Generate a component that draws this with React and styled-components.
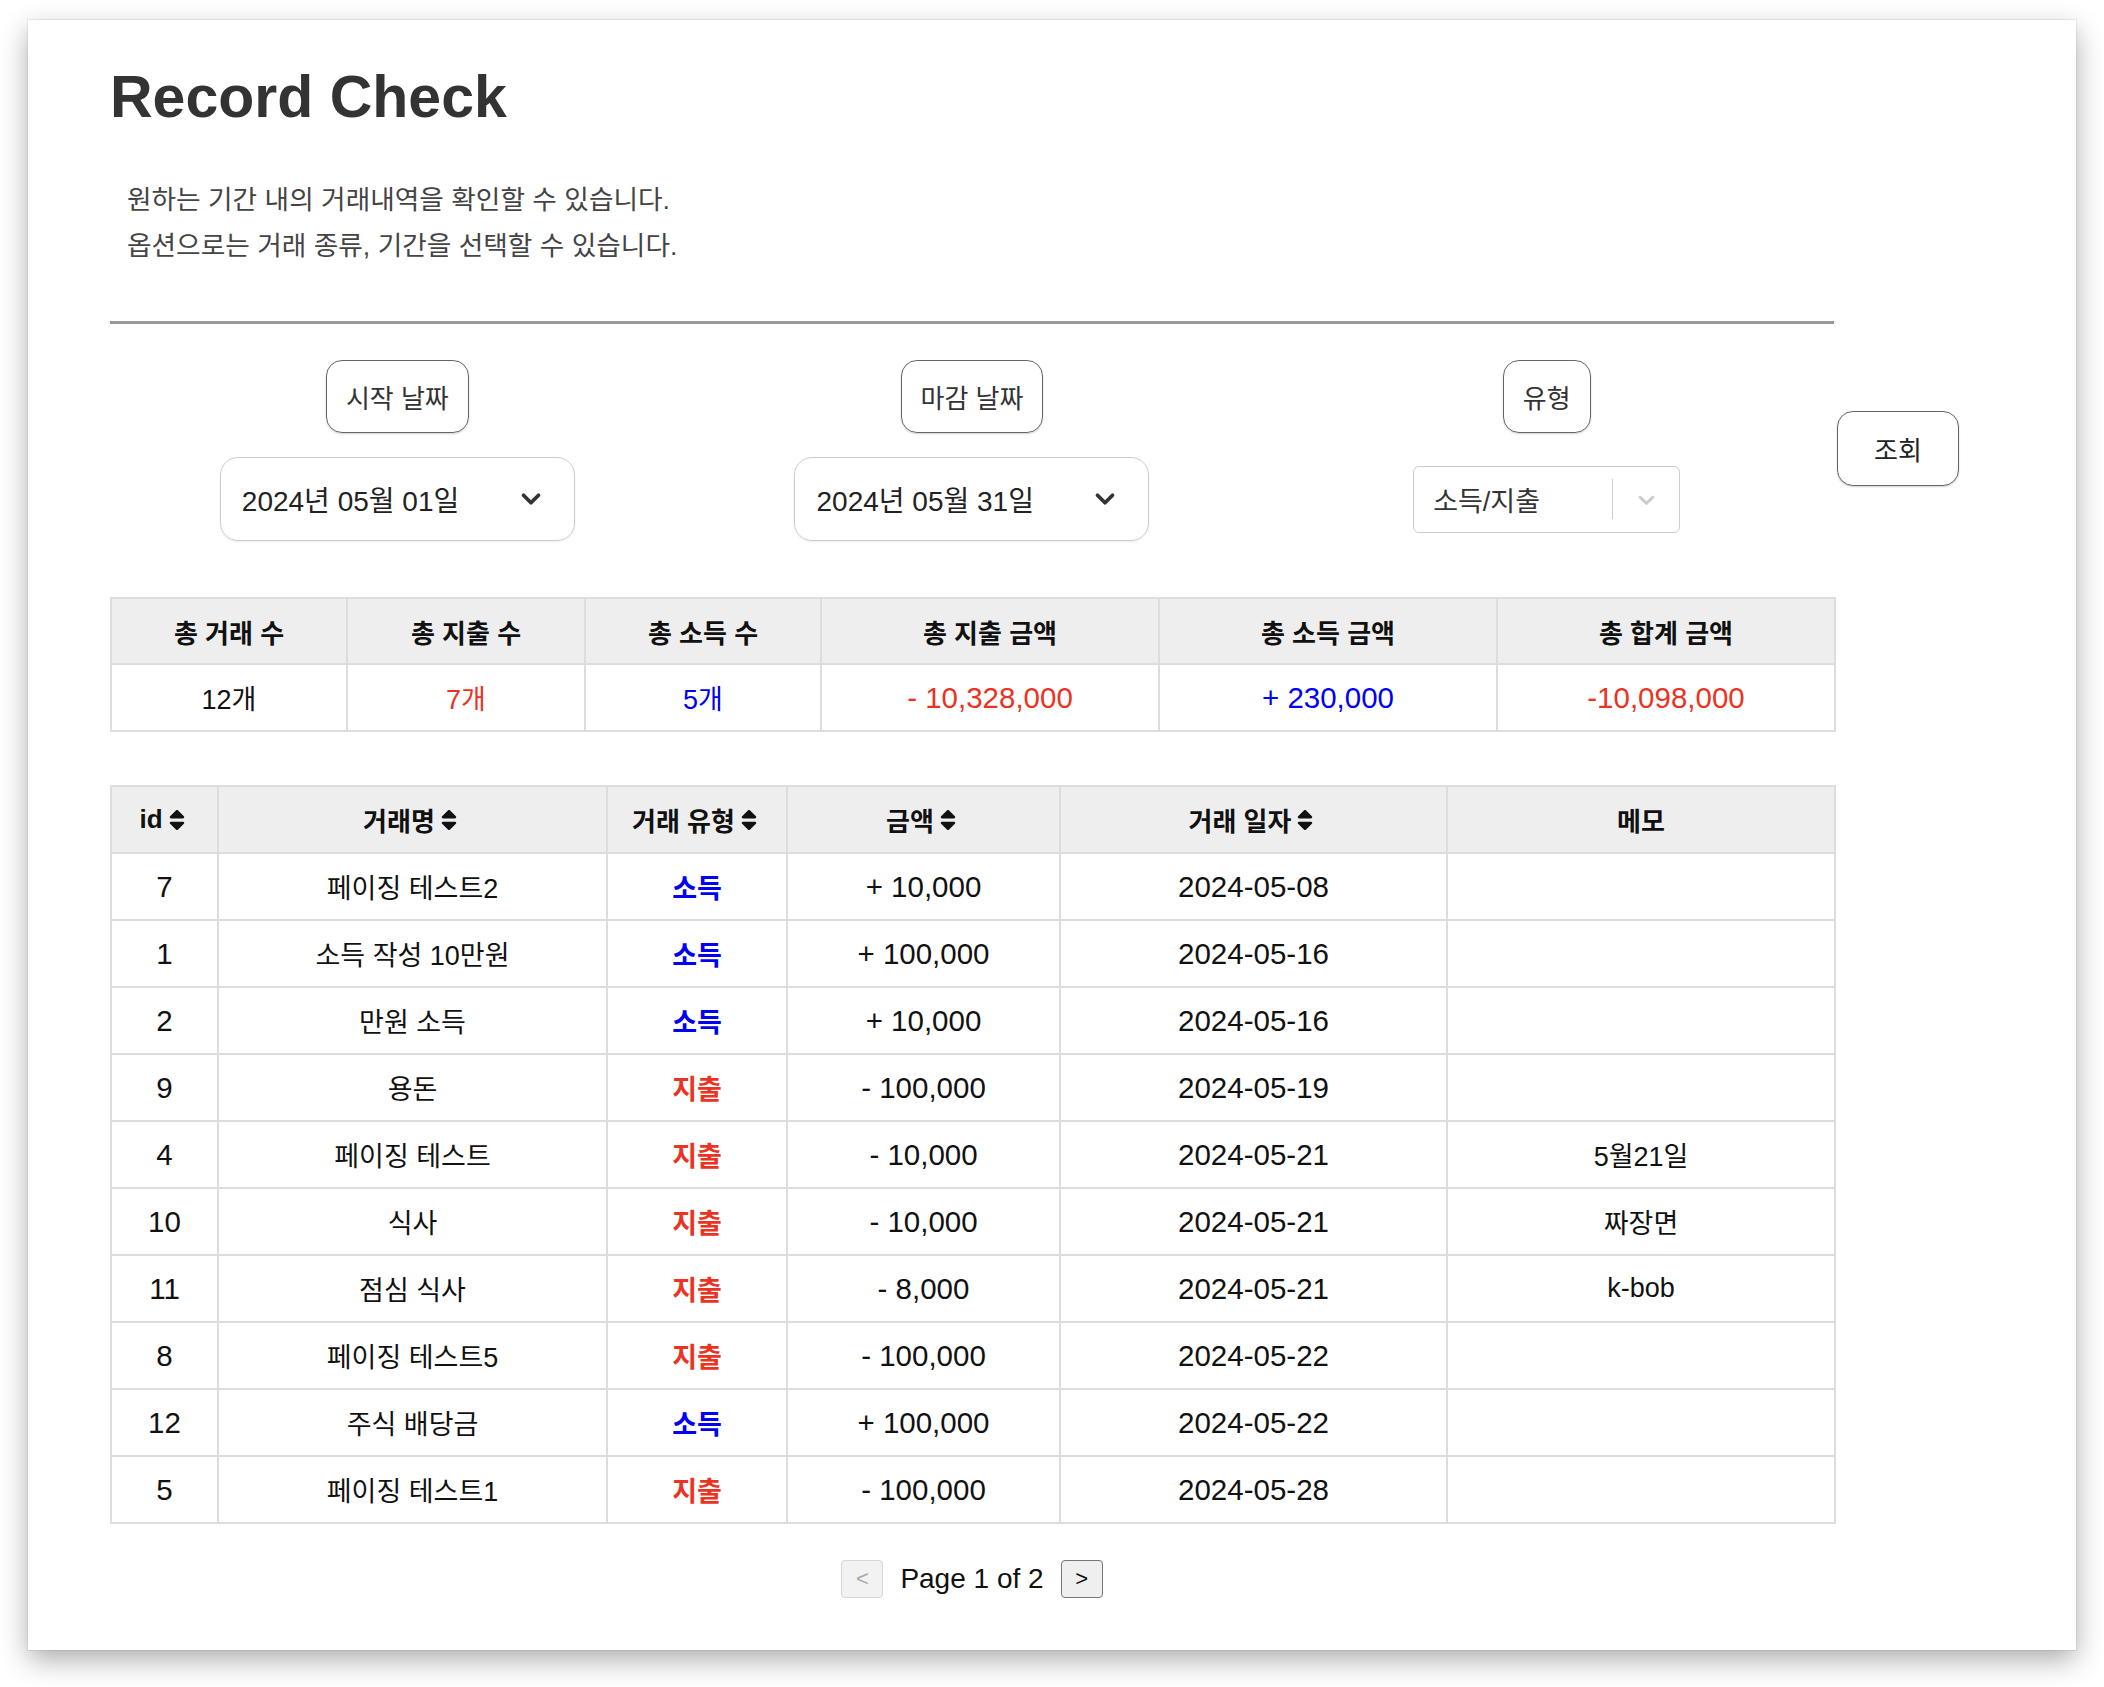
import styled, { createGlobalStyle } from 'styled-components';
import { ChevronDown } from 'lucide-react';
import { FaSort } from 'react-icons/fa';

const GlobalStyle = createGlobalStyle`
  body {
    margin: 0;
    background: #fff;
    font-family: "Liberation Sans", "Noto Sans CJK KR", sans-serif;
    color: #000;
  }
`;

const RED = '#ea3323';
const BLUE = '#0000f5';

const Page = styled.div`
  padding: 20px 28px 38px;
`;

const Card = styled.div`
  width: 2048px;
  box-sizing: border-box;
  background: #fff;
  padding: 48px 0 52px 82px;
  box-shadow: 0 10px 26px rgba(0, 0, 0, 0.32), 0 0 0 1px rgba(0, 0, 0, 0.06);
`;

const Title = styled.h1`
  margin: 0;
  font-size: 59px;
  line-height: 1;
  font-weight: bold;
  color: #333;
`;

const Desc = styled.p`
  margin: 50px 0 0;
  padding-left: 17px;
  font-size: 26.7px;
  line-height: 46px;
  color: #444;
`;

const Divider = styled.hr`
  margin: 52px 0 0;
  width: 1724px;
  height: 3px;
  border: none;
  background: #999;
`;

const FilterRow = styled.div`
  display: flex;
  align-items: center;
  margin-top: 36px;
`;

const FilterColumns = styled.div`
  width: 1724px;
  flex-shrink: 0;
  display: grid;
  grid-template-columns: repeat(3, 1fr);
`;

const FilterCol = styled.div`
  display: flex;
  flex-direction: column;
  align-items: center;
  gap: 24px;
`;

const Label = styled.div`
  height: 73px;
  box-sizing: border-box;
  padding: 0 19px;
  display: flex;
  align-items: center;
  border: 1.5px solid #666;
  border-radius: 16px;
  font-size: 26px;
  color: #333;
  box-shadow: 0 1px 2px rgba(0, 0, 0, 0.18);
`;

const SelectSlot = styled.div`
  height: 84px;
  display: flex;
  align-items: center;
`;

const DateSelect = styled.div`
  width: 355px;
  height: 84px;
  box-sizing: border-box;
  padding: 0 28px 0 21px;
  display: flex;
  align-items: center;
  justify-content: space-between;
  border: 1.5px solid #ccc;
  border-radius: 18px;
  font-size: 28px;
  color: #222;
  box-shadow: 0 1px 2px rgba(0, 0, 0, 0.08);
`;

const TypeSelect = styled.div`
  width: 267px;
  height: 67px;
  box-sizing: border-box;
  display: flex;
  align-items: center;
  border: 1.5px solid #ccc;
  border-radius: 6px;
`;

const TypeValue = styled.span`
  flex: 1;
  padding-left: 19px;
  font-size: 27px;
  color: #333;
`;

const IndicatorSep = styled.span`
  width: 1.5px;
  height: 40px;
  background: #ccc;
`;

const Indicator = styled.span`
  width: 66px;
  display: flex;
  justify-content: center;
  align-items: center;
`;

const SearchButton = styled.button`
  margin: 0 0 5px 3px;
  width: 122px;
  height: 75px;
  background: #fff;
  border: 1.5px solid #666;
  border-radius: 16px;
  font-family: inherit;
  font-size: 26px;
  color: #222;
  box-shadow: 0 1px 2px rgba(0, 0, 0, 0.18);
`;

const Table = styled.table`
  margin-top: ${(p) => p.$gap || 56}px;
  width: 1724px;
  border-collapse: collapse;
  table-layout: fixed;
`;

const Th = styled.th`
  height: ${(p) => p.$h || 64}px;
  padding: 0;
  background: #eee;
  border: 2px solid #ddd;
  font-size: 26px;
  font-weight: bold;
  color: #111;
  text-align: center;
`;

const Td = styled.td`
  height: 65px;
  padding: 0;
  border: 2px solid #ddd;
  font-size: ${(p) => (p.$num ? '29.5px' : '27px')};
  text-align: center;
  color: ${(p) => (p.$tone === 'red' ? RED : p.$tone === 'blue' ? BLUE : '#111')};
  font-weight: ${(p) => (p.$bold ? 'bold' : 'normal')};
`;

const SortHead = styled.span`
  display: inline-flex;
  align-items: center;
  gap: 1px;
`;

const Pager = styled.div`
  margin-top: 36px;
  width: 1724px;
  display: flex;
  justify-content: center;
  align-items: center;
  gap: 17px;
`;

const PageButton = styled.button`
  width: 42px;
  height: 38px;
  padding: 0;
  border-radius: 4px;
  font-family: inherit;
  font-size: 22px;
  background: ${(p) => (p.disabled ? '#f2f2f2' : '#efefef')};
  border: 1.5px solid ${(p) => (p.disabled ? '#d6d6d6' : '#767676')};
  color: ${(p) => (p.disabled ? '#aaa' : '#111')};
`;

const PageText = styled.span`
  font-size: 28px;
  color: #111;
`;

const summary = [
  { head: '총 거래 수', value: '12개', width: 236 },
  { head: '총 지출 수', value: '7개', tone: 'red', width: 238 },
  { head: '총 소득 수', value: '5개', tone: 'blue', width: 236 },
  { head: '총 지출 금액', value: '- 10,328,000', tone: 'red', width: 338, num: true },
  { head: '총 소득 금액', value: '+ 230,000', tone: 'blue', width: 338, num: true },
  { head: '총 합계 금액', value: '-10,098,000', tone: 'red', width: 338, num: true },
];

const columns = [
  { head: 'id', width: 107, sort: true },
  { head: '거래명', width: 389, sort: true },
  { head: '거래 유형', width: 180, sort: true },
  { head: '금액', width: 273, sort: true },
  { head: '거래 일자', width: 387, sort: true },
  { head: '메모', width: 388 },
];

const rows = [
  [7, '페이징 테스트2', '소득', '+ 10,000', '2024-05-08', ''],
  [1, '소득 작성 10만원', '소득', '+ 100,000', '2024-05-16', ''],
  [2, '만원 소득', '소득', '+ 10,000', '2024-05-16', ''],
  [9, '용돈', '지출', '- 100,000', '2024-05-19', ''],
  [4, '페이징 테스트', '지출', '- 10,000', '2024-05-21', '5월21일'],
  [10, '식사', '지출', '- 10,000', '2024-05-21', '짜장면'],
  [11, '점심 식사', '지출', '- 8,000', '2024-05-21', 'k-bob'],
  [8, '페이징 테스트5', '지출', '- 100,000', '2024-05-22', ''],
  [12, '주식 배당금', '소득', '+ 100,000', '2024-05-22', ''],
  [5, '페이징 테스트1', '지출', '- 100,000', '2024-05-28', ''],
];

const CaretIcon = () => (
  <svg width="27" height="27" viewBox="0 0 20 20" fill="#ccc">
    <path d="M4.516 7.548c0.436-0.446 1.043-0.481 1.576 0l3.908 3.747 3.908-3.747c0.533-0.481 1.141-0.446 1.574 0 0.436 0.445 0.408 1.197 0 1.615-0.406 0.418-4.695 4.502-4.695 4.502-0.217 0.223-0.502 0.335-0.787 0.335s-0.57-0.112-0.789-0.335c0 0-4.287-4.084-4.695-4.502s-0.436-1.17 0-1.615z" />
  </svg>
);

const App = () => {
  return (
    <Page>
      <GlobalStyle />
      <Card>
        <Title>Record Check</Title>
        <Desc>
          원하는 기간 내의 거래내역을 확인할 수 있습니다.
          <br />
          옵션으로는 거래 종류, 기간을 선택할 수 있습니다.
        </Desc>
        <Divider />

        <FilterRow>
          <FilterColumns>
            <FilterCol>
              <Label>시작 날짜</Label>
              <SelectSlot>
                <DateSelect>
                  2024년 05월 01일
                  <ChevronDown size={30} strokeWidth={3} color="#333" />
                </DateSelect>
              </SelectSlot>
            </FilterCol>
            <FilterCol>
              <Label>마감 날짜</Label>
              <SelectSlot>
                <DateSelect>
                  2024년 05월 31일
                  <ChevronDown size={30} strokeWidth={3} color="#333" />
                </DateSelect>
              </SelectSlot>
            </FilterCol>
            <FilterCol>
              <Label>유형</Label>
              <SelectSlot>
                <TypeSelect>
                  <TypeValue>소득/지출</TypeValue>
                  <IndicatorSep />
                  <Indicator>
                    <CaretIcon />
                  </Indicator>
                </TypeSelect>
              </SelectSlot>
            </FilterCol>
          </FilterColumns>
          <SearchButton>조회</SearchButton>
        </FilterRow>

        <Table>
          <colgroup>
            {summary.map((s) => (
              <col key={s.head} style={{ width: s.width }} />
            ))}
          </colgroup>
          <thead>
            <tr>
              {summary.map((s) => (
                <Th key={s.head}>{s.head}</Th>
              ))}
            </tr>
          </thead>
          <tbody>
            <tr>
              {summary.map((s) => (
                <Td key={s.head} $tone={s.tone} $num={s.num}>
                  {s.value}
                </Td>
              ))}
            </tr>
          </tbody>
        </Table>

        <Table $gap={53}>
          <colgroup>
            {columns.map((c) => (
              <col key={c.head} style={{ width: c.width }} />
            ))}
          </colgroup>
          <thead>
            <tr>
              {columns.map((c) => (
                <Th key={c.head} $h={65}>
                  {c.sort ? (
                    <SortHead>
                      {c.head}
                      <FaSort size={26} />
                    </SortHead>
                  ) : (
                    c.head
                  )}
                </Th>
              ))}
            </tr>
          </thead>
          <tbody>
            {rows.map(([id, name, type, amount, date, memo]) => (
              <tr key={id}>
                <Td $num>{id}</Td>
                <Td>{name}</Td>
                <Td $tone={type === '소득' ? 'blue' : 'red'} $bold>
                  {type}
                </Td>
                <Td $num>{amount}</Td>
                <Td $num>{date}</Td>
                <Td>{memo}</Td>
              </tr>
            ))}
          </tbody>
        </Table>

        <Pager>
          <PageButton disabled>&lt;</PageButton>
          <PageText>Page 1 of 2</PageText>
          <PageButton>&gt;</PageButton>
        </Pager>
      </Card>
    </Page>
  );
};

export default App;
